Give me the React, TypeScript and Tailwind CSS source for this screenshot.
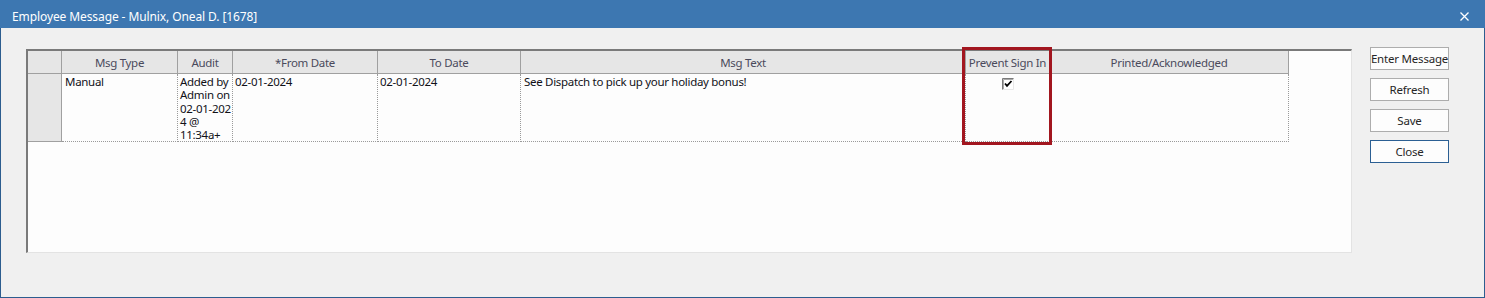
import React from 'react';

const font = { fontFamily: '"Noto Sans", "Open Sans", sans-serif' };

const columns = [
  { key: 'type', label: 'Msg Type', w: 'w-[116px]' },
  { key: 'audit', label: 'Audit', w: 'w-[55px]' },
  { key: 'from', label: '*From Date', w: 'w-[145px]' },
  { key: 'to', label: 'To Date', w: 'w-[143px]' },
  { key: 'text', label: 'Msg Text', w: 'w-[445px]' },
  { key: 'prevent', label: 'Prevent Sign In', w: 'w-[84px]' },
  { key: 'printed', label: 'Printed/Acknowledged', w: 'w-[239px]' },
];

function CheckBox() {
  return (
    <svg width="12" height="12" viewBox="0 0 12 12">
      <rect x="0" y="0" width="12" height="12" fill="#ffffff" />
      <path d="M0.5 12V0.5H12" stroke="#7a7a7a" strokeWidth="1" fill="none" />
      <path d="M1.5 11V1.5H11" stroke="#a9a9a9" strokeWidth="1" fill="none" />
      <path d="M11.5 0.5V11.5H0.5" stroke="#e8e8e8" strokeWidth="1" fill="none" />
      <path d="M3 5.5L5 7.8L9.5 3" stroke="#000000" strokeWidth="1.8" fill="none" />
    </svg>
  );
}

function DlgButton({ label, active }: { label: string; active?: boolean }) {
  return (
    <button
      className={
        'w-[79px] h-[23px] bg-[#fdfdfd] text-[11.5px] tracking-[-0.2px] text-[#262626] whitespace-nowrap flex items-center justify-center border ' +
        (active ? 'border-[#2b5f93]' : 'border-[#adadad]')
      }
    >
      {label}
    </button>
  );
}

export default function App() {
  return (
    <div style={font} className="w-[1485px] h-[298px] flex flex-col bg-[#f0f0f0] border-l border-r border-b border-[#2c5d8f]">
      {/* title bar */}
      <div className="h-[28px] bg-[#3d77b1] flex items-center justify-between pl-[12px] pr-[16px] pt-[5px] -mx-px">
        <span className="text-white text-[12px] tracking-[-0.1px]">Employee Message - Mulnix, Oneal D. [1678]</span>
        <svg width="9" height="9" viewBox="0 0 9 9">
          <path d="M0.5 0.5L8.5 8.5M8.5 0.5L0.5 8.5" stroke="#ffffff" strokeWidth="1.3" />
        </svg>
      </div>

      <div className="flex pl-[25px] pt-[19px]">
        {/* grid panel */}
        <div className="relative w-[1326px] h-[204px] mt-[2px] bg-[#fdfdfd] border-t-2 border-l-2 border-t-[#7a7a7a] border-l-[#7a7a7a] border-r border-b border-r-[#e3e3e3] border-b-[#e3e3e3]">
          {/* header */}
          <div className="flex h-[23px] text-[11.5px] tracking-[-0.3px]">
            <div className="w-[34px] bg-[#e6e6e6] border-r border-b border-[#a0a0a0]" />
            {columns.map((c) => (
              <div
                key={c.key}
                className={c.w + ' bg-[#e6e6e6] border-r border-b border-[#a0a0a0] flex items-center justify-center pt-[2px] text-[#4a4a5c] whitespace-nowrap overflow-hidden'}
              >
                {c.label}
              </div>
            ))}
          </div>

          {/* data row */}
          <div className="flex h-[68px] text-[11.5px] tracking-[-0.3px] text-[#111118] leading-[13.3px]">
            <div className="w-[34px] bg-[#e6e6e6] border-r border-b border-[#a0a0a0]" />
            <div className="w-[116px] border-r border-b border-dotted border-[#9a9a9a] pl-[3px] pt-px">Manual</div>
            <div className="w-[55px] border-r border-b border-dotted border-[#9a9a9a] pl-[2px] pt-px whitespace-nowrap">
              <div>Added by</div>
              <div>Admin on</div>
              <div>02-01-202</div>
              <div>4 @</div>
              <div>11:34a+</div>
            </div>
            <div className="w-[145px] border-r border-b border-dotted border-[#9a9a9a] pl-[2px] pt-px">02-01-2024</div>
            <div className="w-[143px] border-r border-b border-dotted border-[#9a9a9a] pl-[2px] pt-px">02-01-2024</div>
            <div className="w-[445px] border-r border-b border-dotted border-[#9a9a9a] pl-[3px] pt-px">
              See Dispatch to pick up your holiday bonus!
            </div>
            <div className="w-[84px] border-r border-b border-dotted border-[#9a9a9a] flex justify-center pt-[4px]">
              <CheckBox />
            </div>
            <div className="w-[239px] border-r border-b border-dotted border-[#9a9a9a]" />
          </div>

          {/* highlight */}
          <div className="absolute left-[934px] top-[-4px] w-[90px] h-[98px] border-[3px] border-[#a2161f]" />
        </div>

        {/* buttons */}
        <div className="ml-[18px] flex flex-col gap-[8px]">
          <DlgButton label="Enter Message" />
          <DlgButton label="Refresh" />
          <DlgButton label="Save" />
          <DlgButton label="Close" active />
        </div>
      </div>
    </div>
  );
}
